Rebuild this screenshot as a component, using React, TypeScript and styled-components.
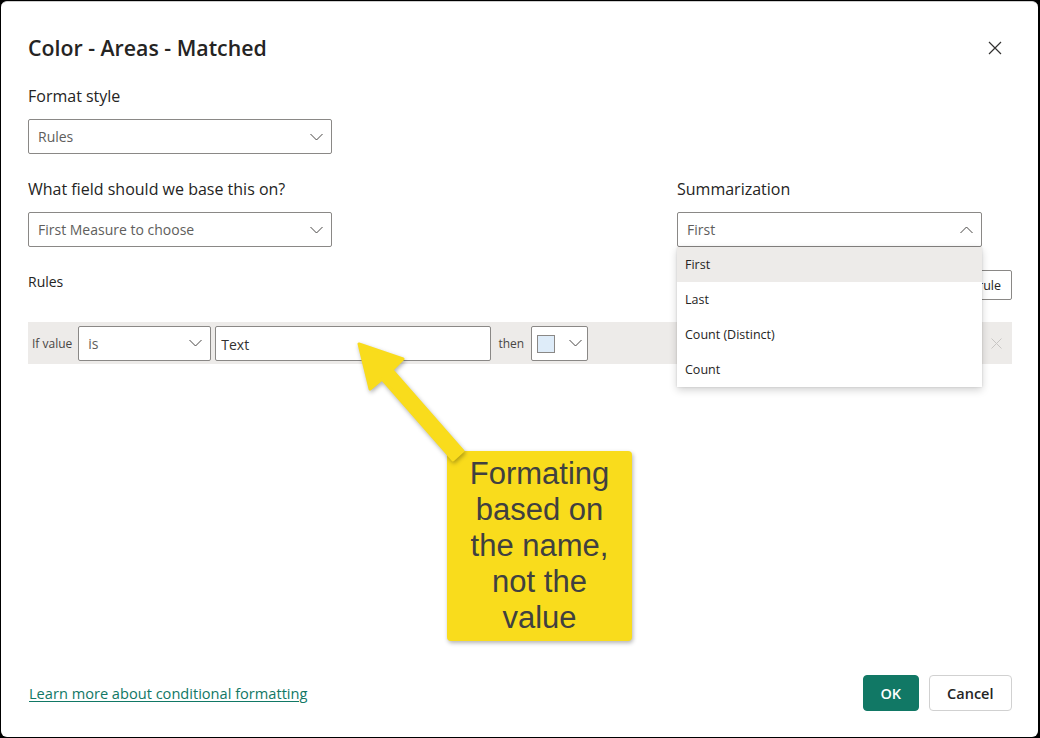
import React from "react";
import styled, { createGlobalStyle } from "styled-components";

const Global = createGlobalStyle`
  html, body { margin: 0; padding: 0; background: #fff; }
  body { font-family: "Open Sans", "Noto Sans", sans-serif; color: #252423; }
  * { box-sizing: border-box; }
`;

const Screen = styled.div`
  width: 1040px;
  height: 738px;
  background: #000;
  padding: 1px 2px 1px 1px;
`;

const Dialog = styled.div`
  position: relative;
  height: 100%;
  background: #fff;
  border-top: 1px solid #cfcfcf;
  border-radius: 6px;
  padding: 32px 26px 26px 27px;
  display: flex;
  flex-direction: column;
`;

const Header = styled.div`
  display: flex;
  align-items: center;
  justify-content: space-between;
  height: 28px;
`;

const Title = styled.h1`
  margin: 0;
  font-size: 21.3px;
  font-weight: 600;
  line-height: 28px;
  color: #252423;
`;

const CloseButton = styled.button`
  border: none;
  background: transparent;
  padding: 0;
  width: 16px;
  height: 16px;
  margin-right: 9px;
  display: flex;
  align-items: center;
  justify-content: center;
`;

const Label = styled.div<{ $size?: number }>`
  font-size: ${(p) => p.$size ?? 16}px;
  line-height: 22px;
  color: #252423;
`;

const Field = styled.div<{ $width: number }>`
  position: relative;
  width: ${(p) => p.$width}px;
  display: flex;
  flex-direction: column;
  gap: 12px;
`;

const Select = styled.div<{ $width?: number; $pad?: number }>`
  width: ${(p) => (p.$width ? `${p.$width}px` : "100%")};
  height: 35px;
  border: 1px solid #8a8886;
  border-radius: 2px;
  background: #fff;
  display: flex;
  align-items: center;
  justify-content: space-between;
  padding: 0 ${(p) => p.$pad ?? 8}px 0 ${(p) => p.$pad ?? 9}px;
  font-size: 14px;
  color: #605e5c;
`;

const FormatBlock = styled.div`
  margin-top: 23px;
`;

const FieldRow = styled.div`
  margin-top: 24px;
  display: flex;
  justify-content: space-between;
  padding-right: 30px;
`;

const RulesHeader = styled.div`
  margin-top: 23px;
  height: 30px;
  display: flex;
  align-items: flex-start;
  justify-content: space-between;
`;

const RulesLabel = styled(Label)`
  padding-top: 1px;
`;

const NewRuleButton = styled.button`
  height: 30px;
  padding: 0 10px;
  border: 1px solid #8a8886;
  border-radius: 2px;
  background: #fff;
  font-family: inherit;
  font-size: 12.5px;
  color: #252423;
`;

const RuleRow = styled.div`
  margin-top: 22px;
  height: 42px;
  background: #edebe9;
  display: flex;
  align-items: center;
  padding: 0 4px;
  gap: 4px;
`;

const RowText = styled.span<{ $after?: number }>`
  font-size: 12px;
  color: #484644;
  margin-right: ${(p) => p.$after ?? 0}px;
`;

const TextInput = styled.div`
  width: 276px;
  height: 35px;
  border: 1px solid #8a8886;
  border-radius: 2px;
  background: #fff;
  display: flex;
  align-items: center;
  padding: 2px 5px 0;
  font-size: 14px;
  color: #323130;
`;

const Swatch = styled.span`
  width: 18px;
  height: 18px;
  background: #deecf9;
  border: 1px solid #8a8886;
  margin-top: 2px;
`;

const DeleteIcon = styled.span`
  margin-left: auto;
  margin-right: 6px;
  display: flex;
`;

const Menu = styled.ul`
  position: absolute;
  left: 0;
  top: 69px;
  width: 305px;
  margin: 0;
  padding: 0;
  list-style: none;
  background: #fff;
  box-shadow: 0 3px 8px rgba(0, 0, 0, 0.18), 0 0 2px rgba(0, 0, 0, 0.12);
  z-index: 5;
`;

const MenuItem = styled.li<{ $active?: boolean }>`
  height: 35px;
  display: flex;
  align-items: center;
  padding-left: 8px;
  font-size: 12.5px;
  color: #252423;
  background: ${(p) => (p.$active ? "#edebe9" : "#fff")};
`;

const Footer = styled.div`
  margin-top: auto;
  display: flex;
  align-items: center;
  justify-content: space-between;
  padding-left: 1px;
`;

const LearnLink = styled.a`
  font-size: 14.6px;
  color: #117865;
  text-decoration: underline;
  text-underline-offset: 2px;
`;

const Buttons = styled.div`
  display: flex;
  gap: 10px;
`;

const Button = styled.button<{ $primary?: boolean }>`
  height: 36px;
  border-radius: 4px;
  font-family: inherit;
  font-size: 14.5px;
  font-weight: 600;
  padding: 0 ${(p) => (p.$primary ? 16.5 : 17.5)}px;
  border: 1px solid ${(p) => (p.$primary ? "#117865" : "#d1d1d1")};
  background: ${(p) => (p.$primary ? "#117865" : "#fff")};
  color: ${(p) => (p.$primary ? "#fff" : "#242424")};
`;

const Callout = styled.div`
  position: absolute;
  left: 446px;
  top: 449px;
  width: 185px;
  height: 190px;
  background: #f9dc1c;
  border-radius: 4px;
  box-shadow: 1px 2px 4px rgba(0, 0, 0, 0.3);
  display: flex;
  align-items: center;
  justify-content: center;
  text-align: center;
  font-family: "Liberation Sans", Arial, sans-serif;
  font-size: 31px;
  line-height: 36px;
  color: #404040;
  z-index: 3;
`;

const ArrowSvg = styled.svg`
  position: absolute;
  left: 0;
  top: 0;
  width: 1037px;
  height: 736px;
  pointer-events: none;
  z-index: 4;
  filter: drop-shadow(1px 2px 2px rgba(0, 0, 0, 0.3));
`;

const Chevron = ({ up = false }: { up?: boolean }) => (
  <svg width="13" height="8" viewBox="0 0 13 8">
    <path
      d={up ? "M0.5 7 L6.5 1 L12.5 7" : "M0.5 1 L6.5 7 L12.5 1"}
      fill="none"
      stroke="#484644"
      strokeWidth="1"
    />
  </svg>
);

export default function App() {
  return (
    <>
      <Global />
      <Screen>
        <Dialog>
          <Header>
            <Title>Color - Areas - Matched</Title>
            <CloseButton aria-label="Close">
              <svg width="14" height="14" viewBox="0 0 14 14">
                <path d="M1 1 L13 13 M13 1 L1 13" stroke="#323130" strokeWidth="1.2" />
              </svg>
            </CloseButton>
          </Header>

          <FormatBlock>
            <Field $width={304}>
              <Label>Format style</Label>
              <Select>
                <span>Rules</span>
                <Chevron />
              </Select>
            </Field>
          </FormatBlock>

          <FieldRow>
            <Field $width={304}>
              <Label>What field should we base this on?</Label>
              <Select>
                <span>First Measure to choose</span>
                <Chevron />
              </Select>
            </Field>
            <Field $width={305}>
              <Label>Summarization</Label>
              <Select>
                <span>First</span>
                <Chevron up />
              </Select>
              <Menu>
                <MenuItem $active>First</MenuItem>
                <MenuItem>Last</MenuItem>
                <MenuItem>Count (Distinct)</MenuItem>
                <MenuItem>Count</MenuItem>
              </Menu>
            </Field>
          </FieldRow>

          <RulesHeader>
            <RulesLabel $size={14}>Rules</RulesLabel>
            <NewRuleButton>+ New rule</NewRuleButton>
          </RulesHeader>

          <RuleRow>
            <RowText $after={2}>If value</RowText>
            <Select $width={133}>
              <span>is</span>
              <Chevron />
            </Select>
            <TextInput>Text</TextInput>
            <RowText $after={3}>&nbsp;then</RowText>
            <Select $width={57} $pad={5}>
              <Swatch />
              <Chevron />
            </Select>
            <DeleteIcon>
              <svg width="11" height="11" viewBox="0 0 11 11">
                <path d="M0.5 0.5 L10.5 10.5 M10.5 0.5 L0.5 10.5" stroke="#c8c6c4" strokeWidth="1" />
              </svg>
            </DeleteIcon>
          </RuleRow>

          <Footer>
            <LearnLink>Learn more about conditional formatting</LearnLink>
            <Buttons>
              <Button $primary>OK</Button>
              <Button>Cancel</Button>
            </Buttons>
          </Footer>

          <Callout>
            Formating
            <br />
            based on
            <br />
            the name,
            <br />
            not the
            <br />
            value
          </Callout>
          <ArrowSvg viewBox="0 0 1037 736">
            <polygon
              points="358,342 402,357 391,368 462,449 452,458 381,377 369,387"
              fill="#f9dc1c"
              stroke="#f9dc1c"
              strokeWidth="3"
              strokeLinejoin="round"
            />
          </ArrowSvg>
        </Dialog>
      </Screen>
    </>
  );
}
